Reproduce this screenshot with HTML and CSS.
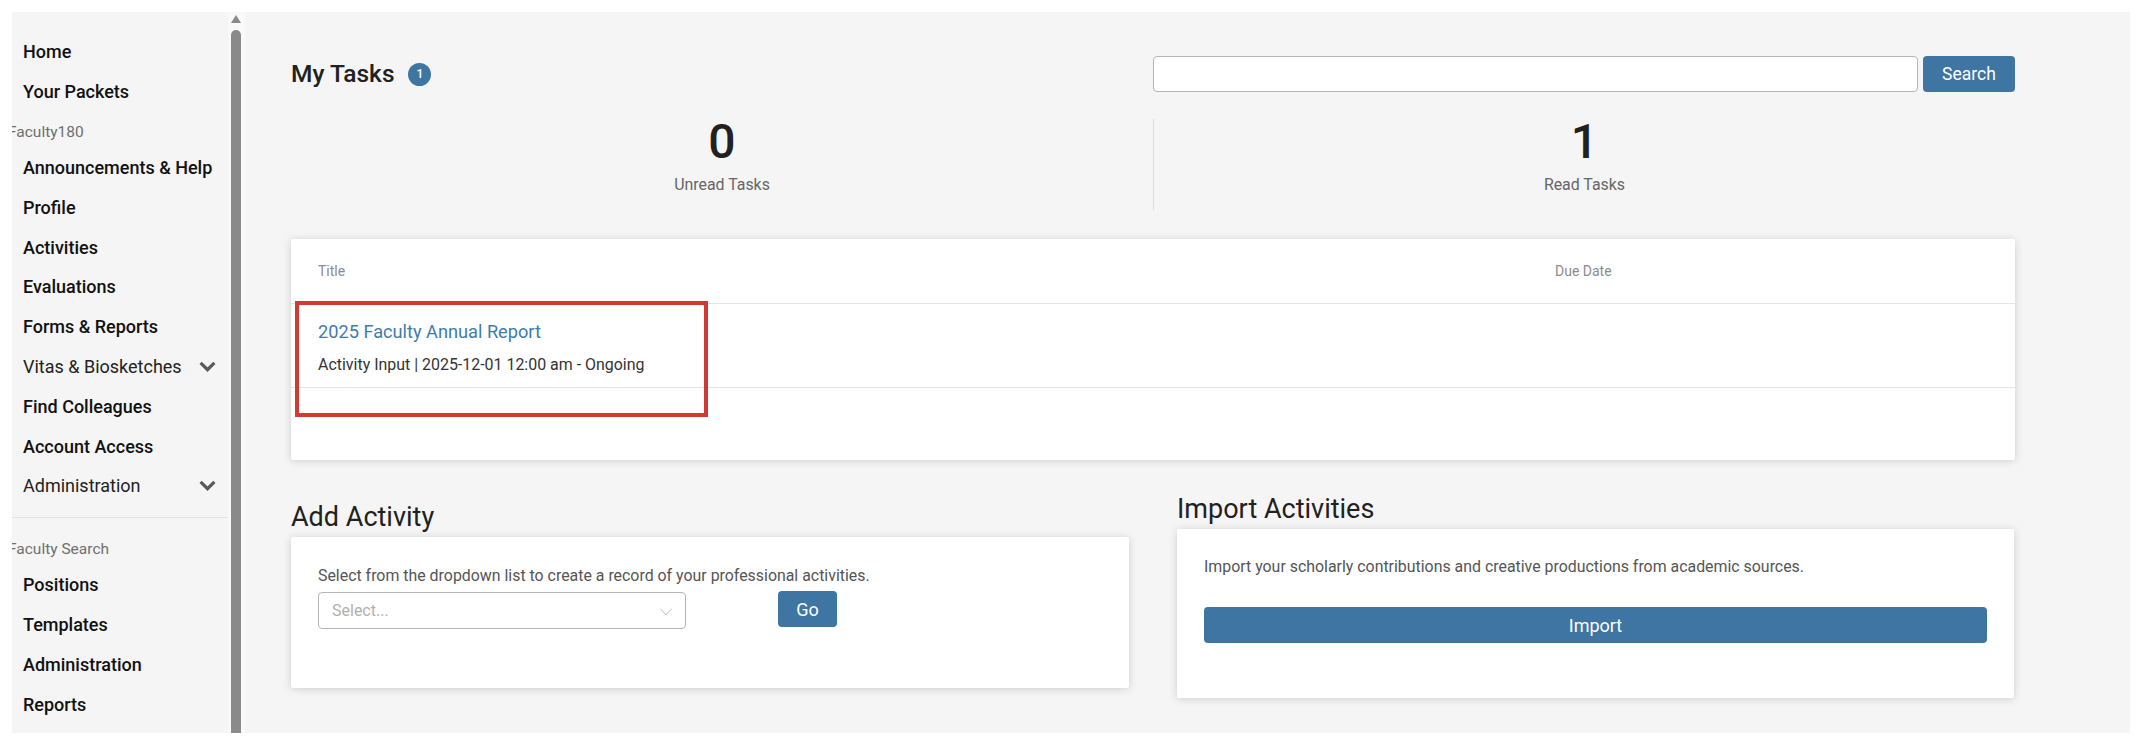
FILE: index.html
```html
<!DOCTYPE html>
<html lang="en">
<head>
<meta charset="utf-8">
<title>My Tasks</title>
<link rel="stylesheet" href="styles.css">
</head>
<body>
<div class="shell">
  <nav class="sidebar">
    <a class="nav-item strong">Home</a>
    <a class="nav-item strong">Your Packets</a>
    <div class="nav-group">Faculty180</div>
    <a class="nav-item strong">Announcements &amp; Help</a>
    <a class="nav-item strong">Profile</a>
    <a class="nav-item strong">Activities</a>
    <a class="nav-item strong">Evaluations</a>
    <a class="nav-item strong">Forms &amp; Reports</a>
    <a class="nav-item">Vitas &amp; Biosketches<svg class="chev" viewBox="0 0 16 10"><path d="M1.5 1.500 8 8l6.500-6.500" fill="none" stroke="#5a5a5a" stroke-width="3"/></svg></a>
    <a class="nav-item strong">Find Colleagues</a>
    <a class="nav-item strong">Account Access</a>
    <a class="nav-item">Administration<svg class="chev" viewBox="0 0 16 10"><path d="M1.5 1.500 8 8l6.500-6.500" fill="none" stroke="#5a5a5a" stroke-width="3"/></svg></a>
    <hr class="nav-rule">
    <div class="nav-group">Faculty Search</div>
    <a class="nav-item strong">Positions</a>
    <a class="nav-item strong">Templates</a>
    <a class="nav-item strong">Administration</a>
    <a class="nav-item strong">Reports</a>
  </nav>
  <div class="scrollbar">
    <div class="scroll-arrow"></div>
    <div class="scroll-thumb"></div>
  </div>
  <main class="main">
    <div class="content">
      <div class="top-row">
        <div class="title-wrap">
          <h1 class="page-title">My Tasks</h1>
          <span class="badge">1</span>
        </div>
        <div class="search">
          <input class="search-input" type="text" aria-label="Search">
          <button class="btn btn-search">Search</button>
        </div>
      </div>
      <div class="stats">
        <div class="stat"><div class="stat-num">0</div><div class="stat-label">Unread Tasks</div></div>
        <div class="stat stat-split"><div class="stat-num">1</div><div class="stat-label">Read Tasks</div></div>
      </div>
      <section class="card tasks">
        <div class="tasks-head"><span class="col-title">Title</span><span class="col-due">Due Date</span></div>
        <div class="task-row">
          <a class="task-link">2025 Faculty Annual Report</a>
          <div class="task-meta">Activity Input | 2025-12-01 12:00 am - Ongoing</div>
          <div class="highlight"></div>
        </div>
      </section>
      <div class="lower">
        <section class="panel panel-add">
          <h2 class="panel-title">Add Activity</h2>
          <div class="card add-card">
            <p class="panel-text">Select from the dropdown list to create a record of your professional activities.</p>
            <div class="add-controls">
              <div class="select"><span>Select...</span><svg class="select-chev" viewBox="0 0 12 8"><path d="M.5.8 6 7 11.500.8" fill="none" stroke="#bdbdbd" stroke-width="1"/></svg></div>
              <button class="btn btn-go">Go</button>
            </div>
          </div>
        </section>
        <section class="panel panel-import">
          <h2 class="panel-title">Import Activities</h2>
          <div class="card import-card">
            <p class="panel-text">Import your scholarly contributions and creative productions from academic sources.</p>
            <button class="btn btn-wide">Import</button>
          </div>
        </section>
      </div>
    </div>
  </main>
</div>
</body>
</html>
```
FILE: styles.css
```css
* { box-sizing: border-box; }
html, body { margin: 0; height: 100%; background: #fff; overflow: hidden; }
body { font-family: Roboto, "Liberation Sans", sans-serif; color: #212121; }
.shell { display: flex; height: 721px; margin: 12px 10px 0 12px; }
.sidebar { width: 216px; flex: none; background: #f5f5f5; padding-top: 20px; overflow: hidden; }
.nav-item { display: flex; align-items: center; justify-content: space-between; height: 39.8px; padding: 0 12px 0 11px; font-size: 18px; font-weight: 500; color: #111; white-space: nowrap; }
.nav-item:not(.strong) { font-weight: 400; color: #222; }
.chev { width: 17px; height: 11px; }
.nav-group { height: 36px; padding-top: 6px; line-height: 29px; margin-left: -4px; font-size: 15.5px; font-weight: 400; color: #6f6f6f; white-space: nowrap; }
.nav-rule { border: 0; border-top: 1px solid #e2e2e2; margin: 11px 0 11px; }
.scrollbar { width: 17px; flex: none; background: #f9f9f9; display: flex; flex-direction: column; align-items: center; padding: 3px 1px 0 0; }
.scroll-arrow { width: 0; height: 0; border-left: 5.5px solid transparent; border-right: 5.5px solid transparent; border-bottom: 8px solid #8a8a8a; }
.scroll-thumb { width: 10px; flex: 1; margin-top: 7px; background: #8a8a8a; border-radius: 5px 5px 0 0; }
.main { flex: 1; background: #f5f5f5; min-width: 0; }
.content { width: 1724px; margin-left: 46px; padding-top: 43px; }
.top-row { display: flex; justify-content: space-between; height: 39px; }
.title-wrap { display: flex; align-items: center; gap: 14px; height: 38px; }
.page-title { margin: 0; font-size: 24.5px; font-weight: 500; line-height: 38px; color: #212121; }
.badge { width: 23px; height: 23px; border-radius: 50%; background: #3f75a2; color: #fff; font-size: 12px; font-weight: 500; display: flex; align-items: center; justify-content: center; }
.search { display: flex; gap: 5px; width: 862px; margin-top: 1px; }
.search-input { flex: 1; height: 36px; background: #fff; border: 1px solid #b5b5b5; border-radius: 4px; }
.btn { background: #3f75a2; color: #fff; border: 0; border-radius: 4px; font-family: inherit; font-size: 17.5px; height: 36px; padding: 0; }
.btn-search { width: 92px; }
.stats { display: flex; height: 91px; margin-top: 25px; }
.stat { width: 862px; text-align: center; }
.stat-split { flex: 1; border-left: 1px solid #dcdcdc; }
.stat-num { font-size: 48px; font-weight: 500; line-height: 48px; margin-top: -1px; color: #212121; }
.stat-label { font-size: 15.9px; color: #666; margin-top: 9px; line-height: 20px; }
.card { background: #fff; border-radius: 2px; box-shadow: 0 1px 8px rgba(0,0,0,.16); }
.tasks { height: 221px; margin-top: 29px; }
.tasks-head { height: 65px; display: flex; align-items: center; padding-left: 27px; font-size: 14px; color: #8c8c8c; border-bottom: 1px solid #e5e5e5; }
.col-title { width: 1237px; }
.task-row { position: relative; height: 84px; padding: 16px 0 0 27px; border-bottom: 1px solid #e5e5e5; }
.task-link { display: block; font-size: 18.2px; line-height: 24px; color: #3f7cab; }
.task-meta { font-size: 15.95px; line-height: 20px; margin-top: 11px; color: #333; }
.highlight { position: absolute; left: 4px; top: -3px; width: 413px; height: 116px; border: 4px solid #d03a32; }
.lower { display: flex; gap: 48px; }
.panel { display: flex; flex-direction: column; width: 838px; }
.panel-import { width: 837px; margin-top: -8px; }
.panel-title { margin: 40px 0 0; font-size: 27px; font-weight: 400; line-height: 34px; color: #212121; }
.panel-text { margin: 0; font-size: 15.9px; line-height: 20px; color: #555; }
.add-card { height: 151px; padding: 29px 27px; margin-top: 3px; }
.add-controls { display: flex; align-items: flex-start; margin-top: 5px; }
.select { width: 368px; height: 37px; margin-top: 1px; display: flex; align-items: center; justify-content: space-between; padding: 0 13px; border: 1px solid #b5b5b5; border-radius: 4px; font-size: 16px; color: #b0b0b0; }
.select-chev { width: 12px; height: 8px; margin-top: 3px; }
.btn-go { width: 59px; margin-left: 92px; font-size: 18px; }
.import-card { height: 169px; padding: 28px 27px; margin-top: 3px; display: flex; flex-direction: column; }
.btn-wide { width: 783px; margin-top: 30px; font-size: 18px; }
```
